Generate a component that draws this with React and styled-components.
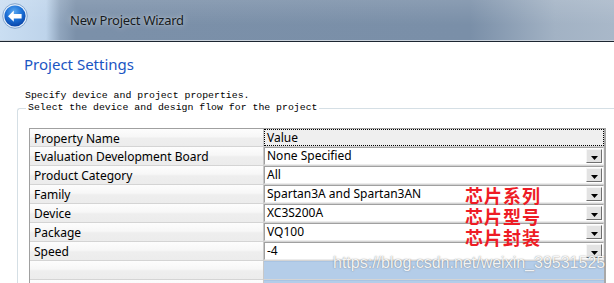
import React from "react";
import styled, { createGlobalStyle } from "styled-components";

const Global = createGlobalStyle`
  html, body { margin: 0; padding: 0; background: #fff; }
  body { width: 614px; height: 283px; overflow: hidden; }
  * { box-sizing: border-box; }
`;

const Window = styled.div`
  position: relative;
  width: 614px;
  height: 283px;
  overflow: hidden;
  background: #fff;
  font-family: "Noto Sans", sans-serif;
`;

const TitleBar = styled.div`
  display: flex;
  align-items: flex-start;
  height: 42px;
  padding: 3px 0 0 2px;
  border-bottom: 1px solid #1d2631;
  box-shadow: inset 0 -1px 0 #c9d1da;
  background:
    linear-gradient(180deg, rgba(255,255,255,0.12), rgba(255,255,255,0) 60%),
    linear-gradient(90deg, #cadef2 0px, #bed4eb 46px, #90a5bd 60px, #7b90a9 76px, #7a8fa8 470px, #a2b2c4 555px, #a9b8c9 614px);
`;

const BackIcon = styled.svg`
  width: 26px;
  height: 26px;
  flex: none;
`;

const TitleText = styled.div`
  margin: 8px 0 0 42px;
  font-size: 13px;
  line-height: 18px;
  letter-spacing: -0.25px;
  color: #151a20;
  text-shadow: 0 0 6px rgba(255, 255, 255, 0.55), 0 0 2px rgba(255, 255, 255, 0.35);
`;

const Heading = styled.div`
  margin: 12px 0 0 24px;
  font-size: 15px;
  line-height: 20px;
  color: #1a55c3;
`;

const Intro = styled.div`
  margin: 16px 0 0 25px;
  font-family: "Liberation Mono", monospace;
  font-size: 9.85px;
  line-height: 12px;
  color: #000;
  white-space: pre;
`;

const GroupHeader = styled.div`
  display: flex;
  height: 12px;
  margin-left: 17px;
`;

const GroupCorner = styled.div`
  align-self: flex-end;
  width: 9px;
  height: 6px;
  border-top: 1px solid #d5dfe5;
  border-left: 1px solid #d5dfe5;
  border-top-left-radius: 3px;
`;

const Legend = styled.div`
  padding: 0 2px;
  font-family: "Liberation Mono", monospace;
  font-size: 9.85px;
  line-height: 12px;
  color: #000;
  white-space: pre;
`;

const GroupRule = styled.div`
  flex: 1;
  align-self: flex-end;
  height: 6px;
  border-top: 1px solid #d5dfe5;
`;

const GroupBody = styled.div`
  margin-left: 17px;
  border-left: 1px solid #d5dfe5;
  padding: 14px 0 0 11px;
  height: 200px;
`;

const Table = styled.div`
  display: grid;
  grid-template-columns: 234px 340px;
  width: 577px;
  border-top: 1px solid #a0a0a0;
  border-left: 1px solid #a0a0a0;
  border-right: 2px solid #a8a8a8;
`;

const NameCell = styled.div`
  height: ${(p) => (p.$header ? 18 : 19)}px;
  padding: 1px 0 0 4px;
  border-bottom: 1px solid #d4d4d4;
  border-right: 1px solid #c8c8c8;
  font-size: 12px;
  line-height: 18px;
  color: #000;
  white-space: nowrap;
  overflow: hidden;
  background: linear-gradient(180deg, #fdfdfd 0%, #f7f7f7 45%, #eeeeee 55%, #ececec 100%);
`;

const ValueCell = styled.div`
  display: flex;
  height: ${(p) => (p.$header ? 18 : 19)}px;
  border-bottom: 1px solid #d4d4d4;
  background: #e6e6e6;
`;

const HeaderValue = styled.div`
  flex: 1;
  padding-left: 2px;
  border: 1px dotted #000;
  background: #efefef;
  font-size: 12px;
  line-height: 15px;
  color: #000;
`;

const Combo = styled.div`
  flex: 1;
  display: flex;
  align-items: center;
  padding-left: 2px;
  border: 1px solid;
  border-color: #a0a0a0 #ececec #ececec #a0a0a0;
  background: #fff;
  font-size: 12px;
  line-height: 16px;
  color: #000;
  white-space: nowrap;
`;

const ComboText = styled.span`
  flex: 1;
  margin-top: -1px;
`;

const DropButton = styled.div`
  display: flex;
  align-items: center;
  justify-content: center;
  width: 16px;
  height: 14px;
  margin-right: 1px;
  padding-top: 3px;
  border: 1px solid;
  border-color: #f6f6f6 #6f6f6f #6f6f6f #f6f6f6;
  background: #e3e3e3;
`;

const Selected = styled.div`
  flex: 1;
  background: #b4cde9;
  border-top: 1px solid #a9c4e3;
`;

const Notes = styled.div`
  position: absolute;
  left: 465px;
  top: 186px;
  display: flex;
  flex-direction: column;
  gap: 3px;
  font-family: "Noto Sans CJK SC", sans-serif;
  font-weight: 700;
  font-size: 18px;
  line-height: 18px;
  letter-spacing: 1px;
  color: #ee1c25;
`;

const Watermark = styled.div`
  position: absolute;
  left: 333px;
  top: 254px;
  font-family: "Liberation Sans", sans-serif;
  font-size: 16px;
  line-height: 18px;
  color: rgba(255, 255, 255, 0.92);
  text-shadow: 0 0 1px rgba(70, 70, 70, 0.55), 0 0 2px rgba(120, 120, 120, 0.3);
  white-space: nowrap;
`;

const rows = [
  ["Evaluation Development Board", "None Specified"],
  ["Product Category", "All"],
  ["Family", "Spartan3A and Spartan3AN"],
  ["Device", "XC3S200A"],
  ["Package", "VQ100"],
  ["Speed", "-4"],
];

const Arrow = () => (
  <svg width="7" height="4" viewBox="0 0 7 4">
    <path d="M0 0H7L3.5 4Z" fill="#000" />
  </svg>
);

export default function App() {
  return (
    <Window>
      <Global />
      <TitleBar>
        <BackIcon viewBox="0 0 26 26">
          <defs>
            <radialGradient id="bg" cx="45%" cy="30%" r="70%">
              <stop offset="0%" stopColor="#5aa8f0" />
              <stop offset="55%" stopColor="#1a6fd6" />
              <stop offset="100%" stopColor="#0a45a8" />
            </radialGradient>
          </defs>
          <circle cx="13" cy="13" r="12.3" fill="#e3eefa" stroke="#6f95c4" strokeWidth="0.8" />
          <circle cx="13" cy="13" r="10.6" fill="url(#bg)" />
          <path d="M6 13.2L11.8 7.6V11H19.6V15.4H11.8V18.8Z" fill="#fff" />
        </BackIcon>
        <TitleText>New Project Wizard</TitleText>
      </TitleBar>

      <Heading>Project Settings</Heading>
      <Intro>Specify device and project properties.</Intro>

      <GroupHeader>
        <GroupCorner />
        <Legend>Select the device and design flow for the project</Legend>
        <GroupRule />
      </GroupHeader>
      <GroupBody>
        <Table>
          <NameCell $header>Property Name</NameCell>
          <ValueCell $header>
            <HeaderValue>Value</HeaderValue>
          </ValueCell>
          {rows.map(([name, value]) => (
            <React.Fragment key={name}>
              <NameCell>{name}</NameCell>
              <ValueCell>
                <Combo>
                  <ComboText>{value}</ComboText>
                  <DropButton>
                    <Arrow />
                  </DropButton>
                </Combo>
              </ValueCell>
            </React.Fragment>
          ))}
          {[0, 1].map((i) => (
            <React.Fragment key={"blank" + i}>
              <NameCell />
              <ValueCell>
                <Selected />
              </ValueCell>
            </React.Fragment>
          ))}
        </Table>
      </GroupBody>

      <Notes>
        <span>芯片系列</span>
        <span>芯片型号</span>
        <span>芯片封装</span>
      </Notes>
      <Watermark>https://blog.csdn.net/weixin_39531525</Watermark>
    </Window>
  );
}
